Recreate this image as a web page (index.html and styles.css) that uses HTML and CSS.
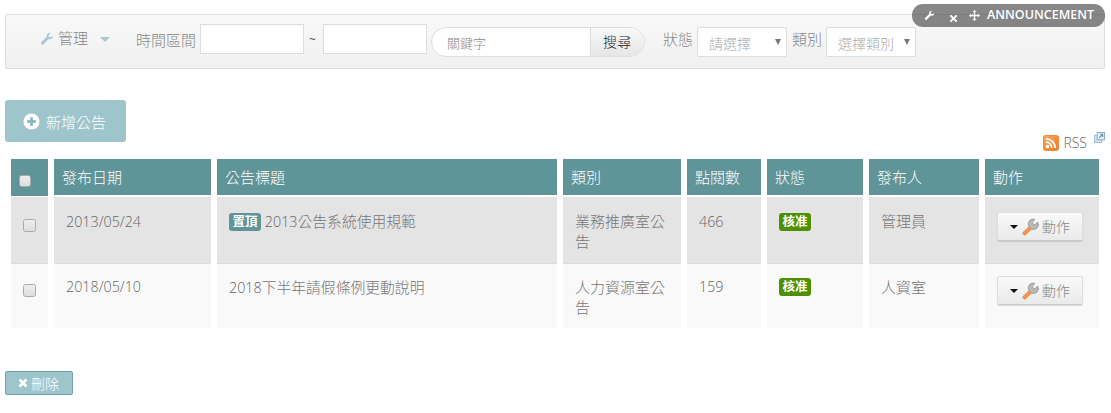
FILE: index.html
```html
<!DOCTYPE html>
<html lang="zh-Hant">
<head>
<meta charset="utf-8">
<title>公告</title>
<link rel="stylesheet" href="styles.css">
</head>
<body>
<div class="page">
  <div class="widget-tag">
    <svg class="tag-wrench" viewBox="0 0 16 16"><path d="M15 4.200a4 4 0 0 1-5.200 3.900L4 14a1.700 1.700 0 0 1-2.400-2.400l5.900-5.800A4 4 0 0 1 12 1L9.700 3.300l.5 2.300 2.300.5z" fill="#fff"/></svg>
    <svg class="tag-x" viewBox="0 0 10 10"><path d="M1.500 1.500l7 7M8.500 1.500l-7 7" stroke="#fff" stroke-width="2.200"/></svg>
    <svg class="tag-move" viewBox="0 0 16 16"><path d="M8 0l3 3H9v4h4V5l3 3-3 3V9H9v4h2l-3 3-3-3h2V9H3v2L0 8l3-3v2h4V3H5z" fill="#fff"/></svg>
    <span>ANNOUNCEMENT</span>
  </div>

  <div class="toolbar">
    <svg class="tool-wrench" viewBox="0 0 16 16"><path d="M15 4.200a4 4 0 0 1-5.200 3.900L4 14a1.700 1.700 0 0 1-2.400-2.400l5.900-5.800A4 4 0 0 1 12 1L9.700 3.300l.5 2.300 2.300.5z" fill="#a5c9d0"/></svg>
    <span class="tool-label manage">管理</span>
    <i class="tool-caret"></i>
    <span class="tool-label period">時間區間</span>
    <input class="date-input" type="text">
    <span class="tilde">~</span>
    <input class="date-input" type="text">
    <div class="search">
      <span class="search-field">關鍵字</span>
      <span class="search-btn">搜尋</span>
    </div>
    <span class="tool-label status">狀態</span>
    <div class="select"><span>請選擇</span><i></i></div>
    <span class="tool-label kind">類別</span>
    <div class="select"><span>選擇類別</span><i></i></div>
  </div>

  <div class="actions">
    <div class="add-btn">
      <svg class="plus" viewBox="0 0 18 18"><circle cx="9" cy="9" r="8.500" fill="#fff"/><path d="M9 4.500v9M4.500 9h9" stroke="#8fb9c2" stroke-width="3"/></svg>
      <span>新增公告</span>
    </div>
    <div class="rss">
      <svg class="rss-icon" viewBox="0 0 16 16"><defs><linearGradient id="rssfill" x1="0" y1="0" x2="1" y2="1"><stop offset="0" stop-color="#f9a860"/><stop offset="1" stop-color="#f07a1c"/></linearGradient></defs><rect x=".5" y=".5" width="15" height="15" rx="2" fill="url(#rssfill)" stroke="#e98a3e"/><circle cx="4.500" cy="11.500" r="1.700" fill="#fff"/><path d="M3 7.200a5.800 5.800 0 0 1 5.800 5.800M3 3.800A9.200 9.200 0 0 1 12.200 13" fill="none" stroke="#fff" stroke-width="1.800"/></svg>
      <span class="rss-text">RSS</span>
      <svg class="ext-icon" viewBox="0 0 12 12"><rect x=".5" y="3.500" width="8" height="8" fill="#d5e3ec" stroke="#9dbbd0"/><rect x="3.500" y=".5" width="8" height="8" fill="#eef4f8" stroke="#7fa8c4"/><path d="M5.500 6.500l3.500-3.500M6.500 2.500H9.500V5.500" fill="none" stroke="#5f92b4" stroke-width="1.200"/></svg>
    </div>
  </div>

  <table class="grid">
    <colgroup>
      <col class="c-check"><col class="c-date"><col class="c-title"><col class="c-kind"><col class="c-count"><col class="c-state"><col class="c-user"><col class="c-act">
    </colgroup>
    <thead>
      <tr>
        <th class="head-check"><input class="check head-box" type="checkbox"></th>
        <th>發布日期</th>
        <th>公告標題</th>
        <th>類別</th>
        <th>點閱數</th>
        <th>狀態</th>
        <th>發布人</th>
        <th>動作</th>
      </tr>
    </thead>
    <tbody>
      <tr class="row-a">
        <td class="cell-check"><input class="check" type="checkbox"></td>
        <td class="num">2013/05/24</td>
        <td class="title"><span class="badge pin">置頂</span> <span class="num">2013</span>公告系統使用規範</td>
        <td>業務推廣室公告</td>
        <td class="num">466</td>
        <td class="cell-badge"><span class="badge ok">核准</span></td>
        <td>管理員</td>
        <td class="cell-act">
          <div class="act-btn"><i class="act-caret"></i><svg class="act-wrench" viewBox="0 0 18 18"><path d="M8 8.500l-6 6a2 2 0 0 0 2.500 2.500l6-6z" fill="#f4934c" stroke="#e07a30" stroke-width=".6"/><path d="M8 8.500a4.800 4.800 0 0 1 6-7l-2.700 2.700.6 2 2 .6L16.600 4a4.800 4.800 0 0 1-6.100 7z" fill="#b9b9b9" stroke="#8c8c8c" stroke-width=".7"/></svg><span>動作</span></div>
        </td>
      </tr>
      <tr class="row-b">
        <td class="cell-check"><input class="check" type="checkbox"></td>
        <td class="num">2018/05/10</td>
        <td class="title"><span class="num">2018</span>下半年請假條例更動說明</td>
        <td>人力資源室公告</td>
        <td class="num">159</td>
        <td class="cell-badge"><span class="badge ok">核准</span></td>
        <td>人資室</td>
        <td class="cell-act">
          <div class="act-btn"><i class="act-caret"></i><svg class="act-wrench" viewBox="0 0 18 18"><path d="M8 8.500l-6 6a2 2 0 0 0 2.500 2.500l6-6z" fill="#f4934c" stroke="#e07a30" stroke-width=".6"/><path d="M8 8.500a4.800 4.800 0 0 1 6-7l-2.700 2.700.6 2 2 .6L16.600 4a4.800 4.800 0 0 1-6.100 7z" fill="#b9b9b9" stroke="#8c8c8c" stroke-width=".7"/></svg><span>動作</span></div>
        </td>
      </tr>
    </tbody>
  </table>

  <div class="del-btn">
    <svg class="del-x" viewBox="0 0 10 10"><path d="M1.500 1.500l7 7M8.500 1.500l-7 7" stroke="#fff" stroke-width="2.600"/></svg>
    <span>刪除</span>
  </div>
</div>
</body>
</html>
```

FILE: styles.css
```css
* { box-sizing: border-box; }
html, body { margin: 0; padding: 0; background: #fff; }
body {
  font-family: "Open Sans", "Noto Sans CJK TC", sans-serif;
  font-size: 15px;
  font-weight: 300;
  color: #777;
  height: 413px;
  overflow: hidden;
}
.page { position: relative; width: 1100px; margin-left: 5px; padding-top: 14px; }

.widget-tag {
  position: absolute; top: 4px; left: 907px; width: 193px; height: 23px;
  background: rgba(70, 70, 70, .65); border-radius: 11px; color: #fff;
  display: flex; align-items: center; padding-left: 12px;
  font-size: 12.500px; font-weight: 600;
}
.tag-wrench { width: 11px; height: 11px; }
.tag-x { width: 9px; height: 9px; margin-left: 14px; margin-top: 5px; }
.tag-move { width: 11px; height: 11px; margin-left: 11px; }
.widget-tag span { margin-left: 7px; margin-top: -3px; }

.toolbar {
  height: 55px; border: 1px solid #ddd; border-radius: 2px;
  background: linear-gradient(#f9f9f9, #f0f0f0);
  display: flex; align-items: flex-start; padding-left: 34px;
}
.tool-wrench { width: 14px; height: 14px; margin-top: 17px; }
.tool-label { margin-top: 13px; line-height: 20px; color: #888; }
.manage { margin-left: 4px; }
.tool-caret {
  width: 0; height: 0; margin: 22px 0 0 12px;
  border: 5px solid transparent; border-top: 5px solid #a5c9d0; border-bottom: 0;
}
.period { margin-left: 26px; margin-top: 15px; }
.date-input {
  width: 104px; height: 30px; margin: 9px 0 0 4px; padding: 0;
  border: 1px solid #ddd; background: #fff; outline: 0;
}
.tilde { margin: 17px 7px 0 5px; font-size: 12px; font-weight: 400; color: #555; line-height: 16px; }
.date-input + .tilde + .date-input { margin-left: 0; }
.search {
  width: 214px; height: 30px; margin: 12px 0 0 4px; display: flex;
  border: 1px solid #ddd; border-radius: 15px; background: #fff; overflow: hidden;
}
.search-field { flex: 1; padding-left: 15px; font-size: 13px; line-height: 31px; color: #888; }
.search-btn {
  width: 54px; border-left: 1px solid #ddd; background: linear-gradient(#f8f8f8, #e6e6e6);
  font-size: 14px; font-weight: 300; line-height: 28px; color: #222; padding-left: 12px;
}
.status { margin-left: 18px; margin-top: 14px; }
.select {
  width: 90px; height: 30px; margin: 12px 0 0 4px; padding: 2px 0 0 11px;
  border: 1px solid #ddd; border-radius: 2px; background: #fff;
  display: flex; align-items: center; justify-content: space-between; color: #aaa; font-size: 14px;
}
.select i {
  width: 0; height: 0; margin: -2px 5px 0 0;
  border: 3.500px solid transparent; border-top: 6px solid #777; border-bottom: 0;
}
.kind { margin-left: 5px; margin-top: 14px; }

.actions { display: flex; justify-content: space-between; height: 59px; margin-top: 31px; }
.add-btn {
  width: 121px; height: 42px; background: #9fc5cc; border-radius: 3px; color: #fff;
  display: flex; align-items: center; padding-left: 18px;
}
.plus { width: 17px; height: 17px; margin-right: 6px; }
.rss { align-self: flex-end; display: flex; align-items: flex-end; margin-bottom: 8px; height: 19px; }
.rss-icon { width: 16px; height: 16px; }
.rss-text { margin: 0 7px 0 4px; font-size: 14px; line-height: 17px; color: #666; }
.ext-icon { width: 11px; height: 11px; align-self: flex-start; }

.grid { width: 1100px; table-layout: fixed; border-collapse: separate; border-spacing: 6px 0; }
.c-check { width: 37px; } .c-date { width: 157px; } .c-title { width: 340px; } .c-kind { width: 118px; }
.c-count { width: 74px; } .c-state { width: 96px; } .c-user { width: 110px; } .c-act { width: 114px; }
.grid th {
  height: 39px; padding: 0 8px 3px; text-align: left; font-weight: 300; color: #fff;
  background: linear-gradient(#5f9498, #5f9498) top / 100% 36px no-repeat;
  border-bottom: 1px solid #e6e6e6;
}
.grid th.head-check { padding: 16px 0 0 8px; vertical-align: top; background-size: 100% 37px; }
.grid td { padding: 13px 12px 0; vertical-align: top; line-height: 20px; color: #777; }
.row-a td { height: 66px; background: #e4e4e4; border-bottom: 1px solid #dcdcdc; }
.row-b td { height: 64px; background: #f9f9f9; }
.grid td.title { font-size: 14.800px; }
.grid td.num, .title .num { font-size: 14.300px; color: #666; }
.row-a td.num { padding-top: 14px; }
.grid td.cell-check { padding: 21px 0 0 12px; }
.grid td.cell-badge { padding-top: 15px; }
.grid td.cell-act { padding: 14px 0 0 12px; }
.row-b td.cell-check { padding-top: 20px; }
.row-b td.cell-act { padding-top: 12px; }
.row-b td.cell-badge { padding-top: 14px; }

.check {
  appearance: none; display: block; width: 13px; height: 13px; margin: 0;
  border: 1px solid #aaa; border-radius: 2.500px; background: linear-gradient(#eee, #ddd);
}
.head-box { width: 12px; height: 12px; }

.badge {
  display: inline-block; width: 32px; height: 18px; border-radius: 3px; color: #fff;
  font-size: 12.500px; font-weight: 700; line-height: 17px; text-align: center; vertical-align: 1px;
}
.pin { background: #5f9498; }
.ok { background: #4e9000; display: block; }

.act-btn {
  width: 86px; height: 29px; border: 1px solid #ddd; border-bottom-color: #c8c8c8;
  background: linear-gradient(#fafafa, #eaeaea); border-radius: 2px;
  display: flex; align-items: center; padding-left: 12px;
  box-shadow: 0 1px 1px rgba(0,0,0,.12);
  font-size: 14px; color: #888;
}
.act-caret { width: 0; height: 0; border: 4px solid transparent; border-top: 4px solid #111; border-bottom: 0; }
.act-wrench { width: 18px; height: 18px; margin: 0 3px 0 3px; }

.del-btn {
  width: 68px; height: 24px; margin-top: 43px; background: #9fc5cc; border: 1px solid #6fa2aa; border-radius: 2px;
  color: #fff; display: flex; align-items: center; padding-left: 12px; font-size: 14px;
}
.del-x { width: 10px; height: 10px; margin-right: 3px; }
```
